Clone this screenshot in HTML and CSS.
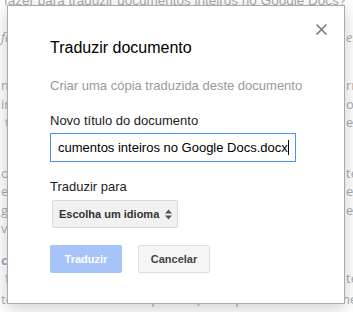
FILE: index.html
```html
<!DOCTYPE html>
<html lang="pt-BR">
<head>
    <meta charset="UTF-8">
    <meta name="viewport" content="width=device-width, initial-scale=1.0">
    <title>Traduzir documento</title>
    <link rel="stylesheet" href="styles.css">
</head>
<body>
    <!-- documento por trás do diálogo -->
    <div class="doc">
        <div class="bg-line heading"><span>fazer para traduzir documentos inteiros no Google Docs?</span><span></span></div>
        <div class="bg-line italic l1"><span>fazer</span><span>em</span></div>
        <div class="bg-line l2"><span>muitos</span><span>rno</span></div>
        <div class="bg-line"><span>ir</span><span>o</span></div>
        <div class="bg-line indent"><span>tarefa</span><span>en</span></div>
        <div class="bg-line l5"><span>o</span><span>te</span></div>
        <div class="bg-line"><span>ez</span><span>er</span></div>
        <div class="bg-line"><span>gera</span><span>e <em class="link">l</em></span></div>
        <div class="bg-line"><span>vo</span><span></span></div>
        <div class="bg-line bold l9"><span>como</span><span></span></div>
        <div class="bg-line indent"><span>faça</span><span>te</span></div>
        <div class="bg-line last"><span>texto a ser traduzido. Se preferir, você pode abrir diretamente</span><span></span></div>
    </div>

    <div class="backdrop"></div>

    <div class="dialog">
        <svg class="close" width="11" height="11" viewBox="0 0 11 11">
            <path d="M0.5 0.5 L10.5 10.5 M10.5 0.5 L0.5 10.5" stroke="#777" stroke-width="1.5" fill="none"/>
        </svg>

        <div class="dialog-title">Traduzir documento</div>
        <div class="dialog-desc">Criar uma cópia traduzida deste documento</div>

        <label class="field-label">Novo título do documento</label>
        <div class="text-input">cumentos inteiros no Google Docs.docx<span class="caret"></span></div>

        <label class="field-label lang-label">Traduzir para</label>
        <div class="select">
            <span>Escolha um idioma</span>
            <svg width="7" height="11" viewBox="0 0 7 11">
                <path d="M0 4.5 L3.5 0.5 L7 4.5 Z M0 6.5 L3.5 10.5 L7 6.5 Z" fill="#555"/>
            </svg>
        </div>

        <div class="buttons">
            <button class="btn btn-action" disabled>Traduzir</button>
            <button class="btn">Cancelar</button>
        </div>
    </div>
</body>
</html>
```

FILE: styles.css
```css
* {
    margin: 0;
    padding: 0;
    box-sizing: border-box;
}

body {
    width: 353px;
    height: 312px;
    overflow: hidden;
    background: white;
    position: relative;
    font-family: "Liberation Sans", Arial, sans-serif;
}

/* documento ao fundo */
.doc {
    font-family: "Open Sans", sans-serif;
    font-size: 13px;
    color: #555;
}

.bg-line {
    display: grid;
    grid-template-columns: 1fr 7px;
    height: 18.5px;
    line-height: 18.5px;
    white-space: nowrap;
}

.bg-line span:first-child {
    padding-left: 1px;
}

.heading {
    margin-top: -8px;
    font-family: "Liberation Sans", Arial, sans-serif;
    font-size: 13.5px;
}

.heading span:first-child {
    padding-left: 4px;
}

.italic {
    font-style: italic;
}

.l1 {
    margin-top: 17px;
}

.l2 {
    margin-top: 30px;
}

.l5 {
    margin-top: 32px;
}

.l9 {
    margin-top: 13px;
}

.bold {
    font-weight: 700;
    color: #3b5b8c;
}

.indent span:first-child {
    padding-left: 5px;
}

.link {
    font-style: normal;
    color: #a33;
}

.last {
    margin-top: 2px;
}

.backdrop {
    position: absolute;
    inset: 0;
    background: rgba(255, 255, 255, 0.5);
}

/* diálogo */
.dialog {
    position: absolute;
    left: 7px;
    top: 5px;
    width: 338px;
    background: white;
    border: 1px solid rgba(0, 0, 0, 0.333);
    box-shadow: 0 4px 16px rgba(0, 0, 0, 0.2);
    padding: 30px 42px;
    display: flex;
    flex-direction: column;
    align-items: flex-start;
}

.close {
    position: absolute;
    top: 18px;
    right: 17px;
}

.dialog-title {
    font-size: 16px;
    line-height: 24px;
    color: #000;
    margin-bottom: 18px;
}

.dialog-desc {
    font-size: 13px;
    line-height: 16px;
    color: #999;
    white-space: nowrap;
    margin-bottom: 19px;
}

.field-label {
    font-size: 13px;
    line-height: 16px;
    color: #222;
    margin-bottom: 4px;
}

.lang-label {
    margin-top: 17px;
    margin-bottom: 5px;
}

.text-input {
    width: 246px;
    height: 29px;
    border: 1px solid #4d90fe;
    padding: 0 0 0 7px;
    font-size: 13px;
    color: #000;
    white-space: nowrap;
    overflow: hidden;
    display: flex;
    align-items: center;
}

.caret {
    display: inline-block;
    flex-shrink: 0;
    width: 1px;
    height: 15px;
    background: #000;
}

.select {
    margin-left: 2px;
    width: 126px;
    height: 28px;
    border: 1px solid #d9d9d9;
    border-radius: 2px;
    background: #f1f1f1;
    padding: 0 5px 0 6px;
    display: flex;
    align-items: center;
    justify-content: space-between;
    font-size: 11px;
    font-weight: 700;
    color: #333;
}

.buttons {
    display: flex;
    gap: 16px;
    margin-top: 17px;
}

.btn {
    font-family: "Liberation Sans", Arial, sans-serif;
    min-width: 72px;
    height: 28px;
    padding: 0 8px;
    border: 1px solid #dcdcdc;
    border-radius: 2px;
    background: #f5f5f5;
    color: #444;
    font-size: 11px;
    font-weight: 700;
}

.btn-action {
    background: #a6c4fa;
    border-color: #a6c4fa;
    color: white;
}
```
